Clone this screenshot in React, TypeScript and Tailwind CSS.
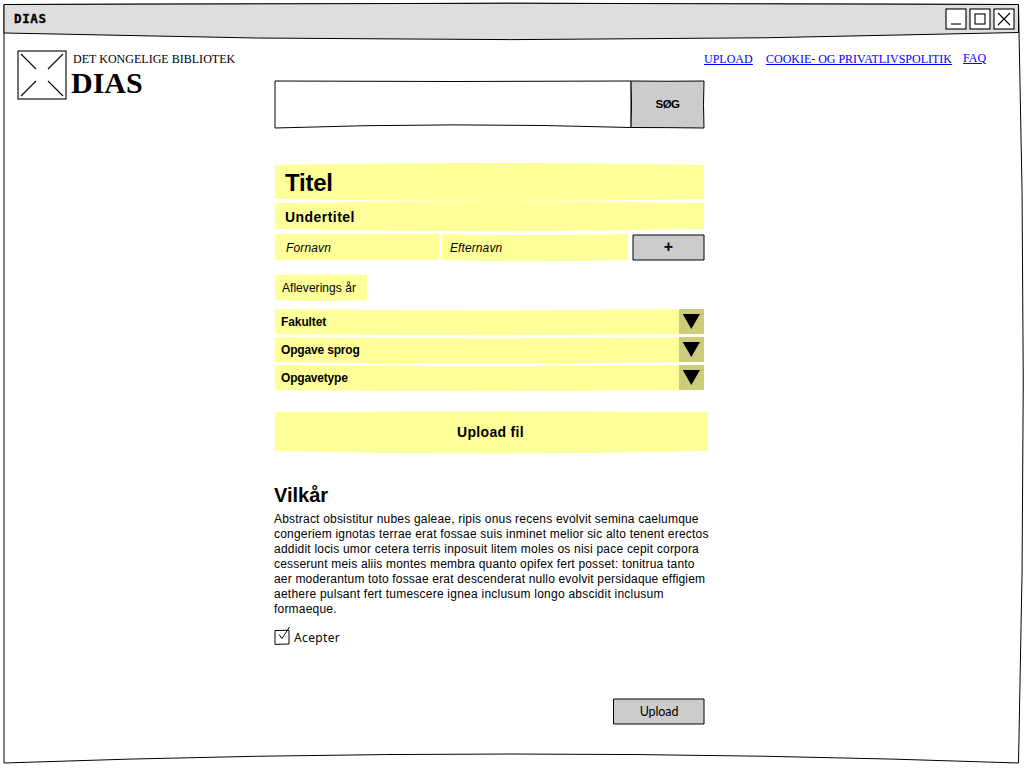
import type { ReactNode } from "react";

type ShapeProps = { w: number; h: number; d: string; fill: string; stroke?: string };

/** Hand-drawn backdrop that sits behind the content of its parent. */
function Shape({ w, h, d, fill, stroke = "none" }: ShapeProps) {
  return (
    <svg
      className="pointer-events-none absolute top-0 left-0 overflow-visible"
      width={w}
      height={h}
      aria-hidden="true"
    >
      <path d={d} fill={fill} stroke={stroke} strokeWidth="1" strokeLinejoin="round" />
    </svg>
  );
}

const YELLOW = "#ffff99";

/** Quadratic-sided bar: `top` and `bottom` are how far each edge bulges outwards. */
function bar(w: number, h: number, top: number, bottom: number) {
  return `M0 0Q${w / 2} ${-2 * top} ${w} 0V${h}Q${w / 2} ${h + 2 * bottom} 0 ${h}Z`;
}

function Field({ w, h, top, bottom, className, children }: {
  w: number; h: number; top: number; bottom: number; className: string; children: ReactNode;
}) {
  return (
    <div className={`relative flex items-center ${className}`}>
      <Shape w={w} h={h} d={bar(w, h, top, bottom)} fill={YELLOW} />
      <span className="relative whitespace-nowrap">{children}</span>
    </div>
  );
}

function Select({ label, tracking }: { label: string; tracking: string }) {
  return (
    <div className="relative flex h-[25px] w-[429px] items-center justify-between">
      <Shape w={429} h={25} d={bar(429, 25, -1.2, 1.2)} fill={YELLOW} />
      <span className={`relative pl-[6px] text-[12px] font-bold ${tracking}`}>{label}</span>
      <span className="relative flex h-[25px] w-[25px] bg-[#cccc7a] pt-[5px] pl-[3px]">
        <svg width="18" height="15" aria-hidden="true">
          <path d="M.7 0H18L9.3 15Z" fill="#000" />
        </svg>
      </span>
    </div>
  );
}

function WindowButton({ children }: { children: ReactNode }) {
  return (
    <svg width="22" height="22" fill="none" stroke="#000" strokeWidth="1.1" aria-hidden="true">
      <rect x="1" y="1" width="20" height="20" fill="#fff" />
      {children}
    </svg>
  );
}

const terms = [
  { text: "Abstract obsistitur nubes galeae, ripis onus recens evolvit semina caelumque", tracking: "tracking-[0.2px]" },
  { text: "congeriem ignotas terrae erat fossae suis inminet melior sic alto tenent erectos", tracking: "tracking-[0.205px]" },
  { text: "addidit locis umor cetera terris inposuit litem moles os nisi pace cepit corpora", tracking: "tracking-[0.21px]" },
  { text: "cesserunt meis aliis montes membra quanto opifex fert posset: tonitrua tanto", tracking: "tracking-[0.19px]" },
  { text: "aer moderantum toto fossae erat descenderat nullo evolvit persidaque effigiem", tracking: "tracking-[0.18px]" },
  { text: "aethere pulsant fert tumescere ignea inclusum longo abscidit inclusum", tracking: "tracking-[0.235px]" },
  { text: "formaeque.", tracking: "tracking-[0.2px]" },
];

export default function App() {
  return (
    <div className="relative flex h-[768px] w-[1024px] flex-col overflow-hidden bg-white font-['Liberation_Sans',Arial,sans-serif] text-black">
      <Shape
        w={1024}
        h={768}
        d="M4 4.5Q511 2 1018.5 4.5Q1028 380 1018.5 763Q511 745 4 763Z"
        fill="#fff"
        stroke="#000"
      />

      <header className="relative mt-1 ml-1 flex h-[30px] w-[1014px] shrink-0 items-center justify-between pr-[3px] pl-[10px]">
        <Shape w={1014} h={30} d="M0 .5Q507 -2 1014.5 .5V28.5Q507 42.5 0 29Z" fill="#dedede" stroke="#000" />
        <h1 className="relative font-['Comic_Sans_MS','DejaVu_Sans_Mono',monospace] text-[12.5px] leading-[16px] font-bold tracking-[0.6px] [-webkit-text-stroke:0.3px_#000]">DIAS</h1>
        <div className="relative flex gap-[2px]">
          <WindowButton><path d="M6 16H16" /></WindowButton>
          <WindowButton><rect x="6" y="6" width="10" height="10" /></WindowButton>
          <WindowButton><path d="M5 5L17 17M17 5L5 17" /></WindowButton>
        </div>
      </header>

      <div className="relative flex flex-1">
        <aside className="flex w-[275px] shrink-0 gap-[4px] pt-[16px] pl-[17px] font-['Liberation_Serif',serif]">
          <svg width="50" height="50" fill="none" stroke="#000" strokeWidth="1.1" aria-hidden="true">
            <rect x="1" y="1" width="48" height="48" />
            <path d="M4 4L19 19M46 4L31 19M4 46L19 31M46 46L31 31" />
          </svg>
          <div className="whitespace-nowrap">
            <p className="mt-[2px] pl-[2px] text-[12px] leading-[15px] tracking-[0.02px]">DET KONGELIGE BIBLIOTEK</p>
            <p className="text-[30px] leading-[32px] font-bold">DIAS</p>
          </div>
        </aside>

        <main className="flex flex-1 flex-col">
          <nav className="flex h-[47px] shrink-0 items-start pt-[17px] pl-[429px] font-['Liberation_Serif',serif] text-[12px] leading-[15px] whitespace-nowrap text-[#0000ff] underline">
            <a href="#upload" className="w-[62px] pt-px"><span>UPLOAD</span></a>
            <a href="#cookies" className="w-[197px] pt-px"><span className="tracking-[-0.02px]">COOKIE- OG PRIVATLIVSPOLITIK</span></a>
            <a href="#faq"><span>FAQ</span></a>
          </nav>

          <form className="flex w-[433px] flex-col" onSubmit={(event) => event.preventDefault()}>
            <div className="relative flex h-[47px] w-[429px] justify-end">
              <Shape w={357} h={47} d="M0 0Q178 1 356 0V46.5Q178 41 0 47Z" fill="#fff" stroke="#000" />
              <button type="button" className="relative h-[47px] w-[73px] text-[11.5px] font-bold tracking-[-0.5px]">
                <Shape w={73} h={47} d="M0 0Q36 .5 73 0Q72 23 73 47Q36 46.5 0 46.5Q1 23 0 0Z" fill="#ccc" stroke="#000" />
                <span className="relative">SØG</span>
              </button>
            </div>

            <Field w={429} h={34} top={2} bottom={2} className="mt-[37px] h-[34px] w-[429px] pt-[2px] pl-[10px] text-[24px] leading-[28px] font-bold tracking-[-0.25px]">Titel</Field>
            <Field w={429} h={26} top={1.7} bottom={2.3} className="mt-[4px] h-[26px] w-[429px] pt-[2px] pl-[10px] text-[14px] font-bold tracking-[0.45px]">Undertitel</Field>

            <div className="mt-[5px] flex h-[26px] w-[430px]">
              <Field w={164} h={26} top={0} bottom={0} className="mr-[3px] w-[164px] pt-px pl-[11px] text-[12px] tracking-[0.15px] italic">Fornavn</Field>
              <Field w={186} h={26} top={-1} bottom={1.3} className="mr-[4px] w-[186px] pt-px pl-[8px] text-[12px] tracking-[0.1px] italic">Efternavn</Field>
              <button type="button" className="relative h-[26px] w-[73px] text-[16px] leading-[24px] font-bold">
                <Shape w={73} h={26} d="M1 1H72V26H1Z" fill="#ccc" stroke="#000" />
                <span className="relative">+</span>
              </button>
            </div>

            <Field w={92} h={25} top={0.8} bottom={1} className="mt-[15px] h-[25px] w-[92px] pl-[7px] text-[12px] tracking-[0.04px]">Afleverings år</Field>

            <div className="mt-[9px] flex flex-col gap-[3px]">
              <Select label="Fakultet" tracking="tracking-[-0.1px]" />
              <Select label="Opgave sprog" tracking="tracking-[-0.17px]" />
              <Select label="Opgavetype" tracking="tracking-[-0.2px]" />
            </div>

            <Field w={433} h={39} top={0.8} bottom={2.5} className="mt-[22px] h-[39px] w-[433px] justify-center pt-px pr-[2px] text-[14px] font-bold tracking-[0.3px]">Upload fil</Field>

            <section className="mt-[32px] -ml-px">
              <h2 className="text-[20px] leading-[24px] font-bold">Vilkår</h2>
              <p className="mt-[5px] text-[12px] leading-[15px]">
                {terms.map((line) => (
                  <span key={line.text} className={`block whitespace-nowrap ${line.tracking}`}>{line.text}</span>
                ))}
              </p>
            </section>

            <label className="mt-[9px] -ml-px flex h-[20px] items-start">
              <svg width="20" height="20" fill="none" stroke="#000" strokeWidth="1" aria-hidden="true">
                <path d="M1 4.5L15 4.3V18L1 18.4Z" />
                <path d="M5 8.5L8 12.5L15.5 1" />
              </svg>
              <span className="pt-[3px] font-['Comic_Sans_MS','Noto_Sans',sans-serif] text-[12px] leading-[18px] tracking-[0.35px]">Acepter</span>
            </label>

            <button type="submit" className="relative mt-[52px] ml-[338px] h-[26px] w-[91px] pt-[2px] font-['Comic_Sans_MS',Lato,sans-serif] text-[12.5px] tracking-[-0.1px]">
              <Shape w={91} h={26} d="M.5 1H91V26H.5Z" fill="#ccc" stroke="#000" />
              <span className="relative pl-px">Upload</span>
            </button>
          </form>
        </main>
      </div>
    </div>
  );
}
